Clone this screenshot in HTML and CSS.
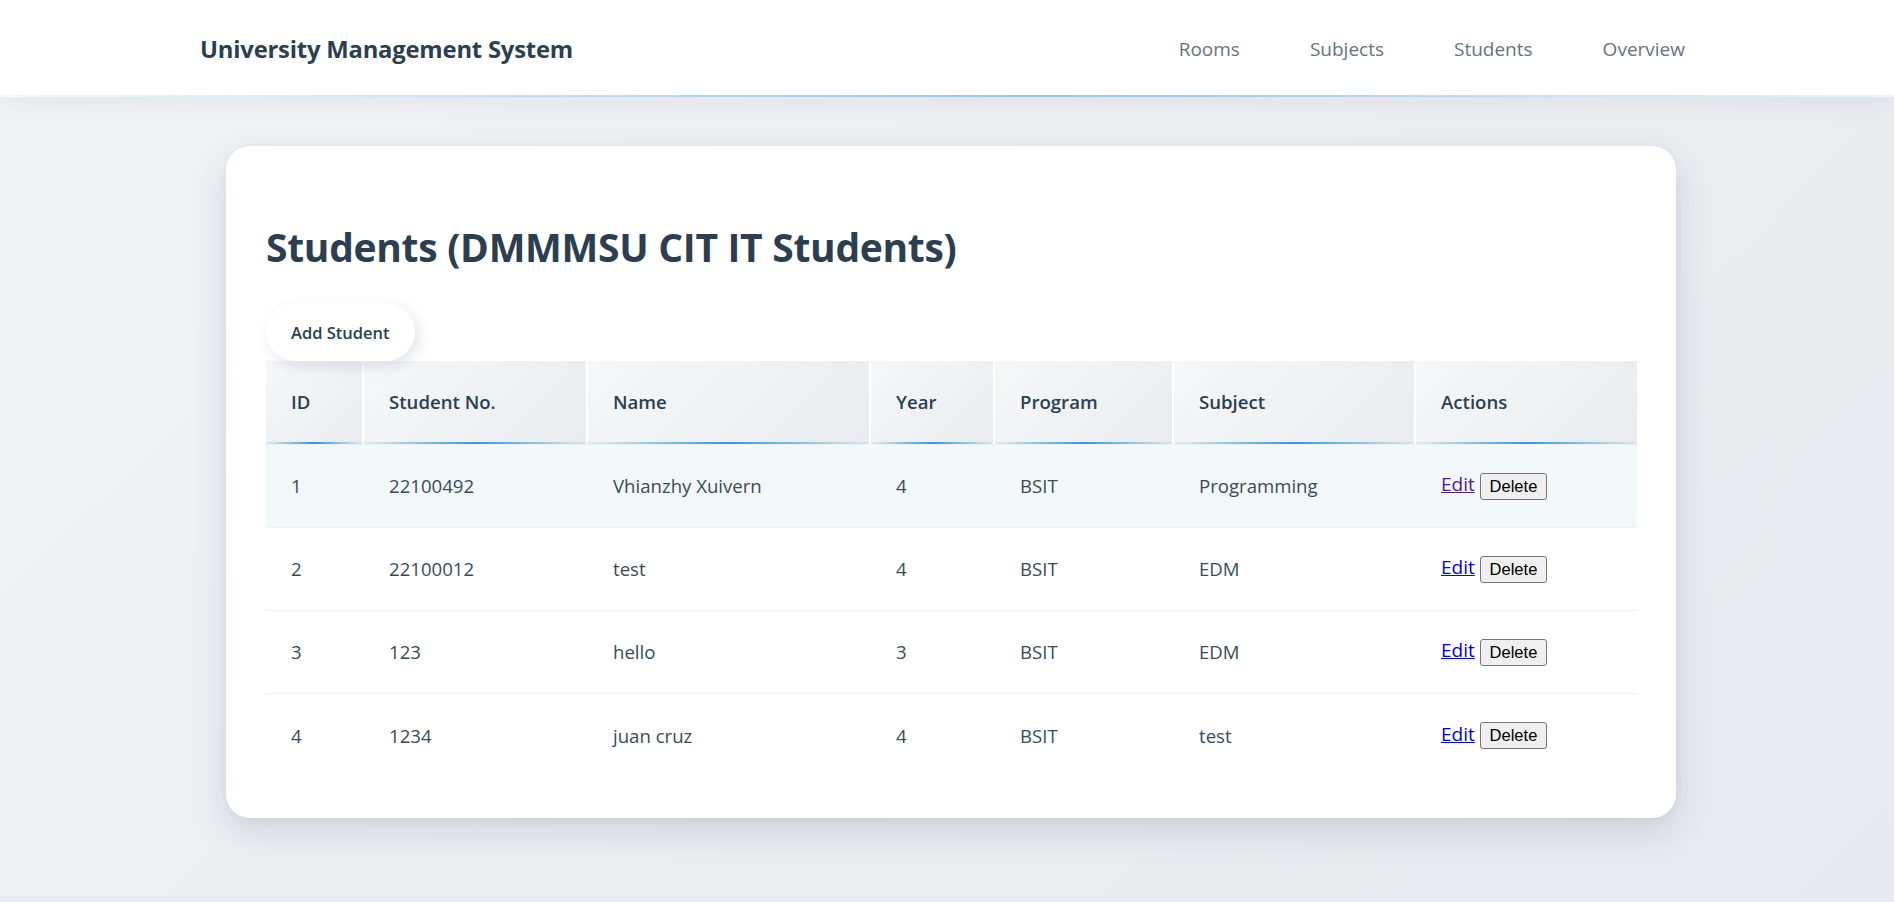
FILE: index.html
```html
<!DOCTYPE html>
<html lang="en">
<head>
<meta charset="utf-8">
<title>University Management System</title>
<link rel="stylesheet" href="styles.css">
</head>
<body>
<header class="site-header">
  <div class="header-inner">
    <div class="brand">University Management System</div>
    <nav class="nav">
      <a class="nav-link" href="#">Rooms</a>
      <a class="nav-link" href="#">Subjects</a>
      <a class="nav-link" href="#">Students</a>
      <a class="nav-link" href="#">Overview</a>
    </nav>
  </div>
</header>
<main class="main">
  <section class="card">
    <h1 class="page-title">Students (DMMMSU CIT IT Students)</h1>
    <button class="add-btn" type="button">Add Student</button>
    <table class="data-table">
      <colgroup>
        <col class="c-id"><col class="c-no"><col class="c-name"><col class="c-year"><col class="c-prog"><col class="c-subj"><col class="c-act">
      </colgroup>
      <thead>
        <tr>
          <th>ID</th><th>Student No.</th><th>Name</th><th>Year</th><th>Program</th><th>Subject</th><th>Actions</th>
        </tr>
      </thead>
      <tbody>
        <tr class="is-active">
          <td>1</td><td>22100492</td><td>Vhianzhy Xuivern</td><td>4</td><td>BSIT</td><td>Programming</td>
          <td><a class="edit-link visited" href="#">Edit</a> <button class="del-btn" type="button">Delete</button></td>
        </tr>
        <tr>
          <td>2</td><td>22100012</td><td>test</td><td>4</td><td>BSIT</td><td>EDM</td>
          <td><a class="edit-link" href="#">Edit</a> <button class="del-btn" type="button">Delete</button></td>
        </tr>
        <tr>
          <td>3</td><td>123</td><td>hello</td><td>3</td><td>BSIT</td><td>EDM</td>
          <td><a class="edit-link" href="#">Edit</a> <button class="del-btn" type="button">Delete</button></td>
        </tr>
        <tr class="last">
          <td>4</td><td>1234</td><td>juan cruz</td><td>4</td><td>BSIT</td><td>test</td>
          <td><a class="edit-link" href="#">Edit</a> <button class="del-btn" type="button">Delete</button></td>
        </tr>
      </tbody>
    </table>
  </section>
</main>
</body>
</html>
```
FILE: styles.css
```css
html {
  background: #e8eaef;
}
body {
  margin: 0;
  min-height: 896px;
  font-family: "Open Sans", "Noto Sans", sans-serif;
  color: #2c3e50;
  background: linear-gradient(135deg, #f0f2f5 0%, #e7e9ee 100%);
}

.site-header {
  position: relative;
  height: 97px;
  background: #ffffff;
  box-shadow: 0 4px 24px rgba(40, 50, 80, 0.07);
}
.site-header::after {
  content: "";
  position: absolute;
  left: 0;
  right: 0;
  bottom: 0;
  height: 2px;
  background: linear-gradient(90deg, rgba(52, 152, 219, 0.05) 0%, rgba(52, 152, 219, 0.55) 55%, rgba(52, 152, 219, 0.1) 100%);
}
.header-inner {
  width: 1494px;
  height: 100%;
  margin: 0 auto;
  display: flex;
  align-items: center;
  justify-content: space-between;
}
.brand {
  font-size: 23.8px;
  font-weight: 700;
  color: #2c3e50;
  letter-spacing: -0.2px;
}
.nav {
  display: flex;
  gap: 52px;
}
.nav-link {
  padding: 8px 9px;
  font-size: 19px;
  font-weight: 500;
  color: #69737e;
  text-decoration: none;
}

.main {
  padding: 49px 0 0 8px;
}
.card {
  width: 1450px;
  box-sizing: border-box;
  margin: 0 auto;
  padding: 40px 39px 41px 40px;
  background: #ffffff;
  border-radius: 24px;
  box-shadow: 0 14px 34px rgba(60, 72, 110, 0.16), 0 2px 8px rgba(60, 72, 110, 0.04);
}
.page-title {
  margin: 35px 0 30px;
  font-size: 39px;
  line-height: 52px;
  font-weight: 700;
  color: #2c3e50;
  letter-spacing: -0.3px;
}
.add-btn {
  display: block;
  height: 58px;
  padding: 0 25px;
  border: none;
  border-radius: 29px;
  background: #ffffff;
  font-family: "Open Sans", "Noto Sans", sans-serif;
  font-size: 16.5px;
  font-weight: 600;
  color: #2c3e50;
  box-shadow: 4px 5px 14px rgba(60, 72, 110, 0.14), -2px -2px 8px rgba(255, 255, 255, 0.9);
  position: relative;
  z-index: 1;
}

.data-table {
  width: 1371px;
  border-collapse: separate;
  border-spacing: 0;
  table-layout: fixed;
}
.c-id { width: 98px; }
.c-no { width: 224px; }
.c-name { width: 283px; }
.c-year { width: 124px; }
.c-prog { width: 179px; }
.c-subj { width: 242px; }
.c-act { width: 221px; }

.data-table thead tr {
  height: 84px;
}
.data-table tbody tr {
  height: 83px;
}
.data-table th {
  position: relative;
  padding: 0 25px 2px;
  text-align: left;
  font-size: 18.6px;
  line-height: 24px;
  font-weight: 600;
  color: #2c3e50;
  background: linear-gradient(135deg, #f6f7f9 0%, #e9ebee 100%);
  border-right: 2px solid #ffffff;
  border-bottom: 1px solid #eceef1;
}
.data-table th:last-child {
  border-right: none;
}
.data-table th::after {
  content: "";
  position: absolute;
  left: 0;
  right: 0;
  bottom: 0;
  height: 2px;
  background: linear-gradient(90deg, rgba(52, 152, 219, 0.08), #3498db 50%, rgba(52, 152, 219, 0.08));
}
.data-table td {
  padding: 0 25px;
  font-size: 18.6px;
  line-height: 24px;
  color: #3b4a5a;
  border-bottom: 1px solid #eef0f2;
  white-space: nowrap;
  vertical-align: middle;
}
.data-table tr.last td {
  border-bottom: none;
}
.data-table tr.is-active td {
  background: #f3f8fb;
}

.edit-link {
  font-size: 19px;
  color: #0000ee;
  text-decoration: underline;
}
.edit-link.visited {
  color: #551a8b;
}
.del-btn {
  margin-left: 0;
  padding: 4px 9px;
  font-family: "Liberation Sans", Arial, sans-serif;
  font-size: 16.5px;
  line-height: 17px;
  color: #000000;
  background: #efefef;
  border: 1px solid #767676;
  border-radius: 3px;
  vertical-align: middle;
}
```
